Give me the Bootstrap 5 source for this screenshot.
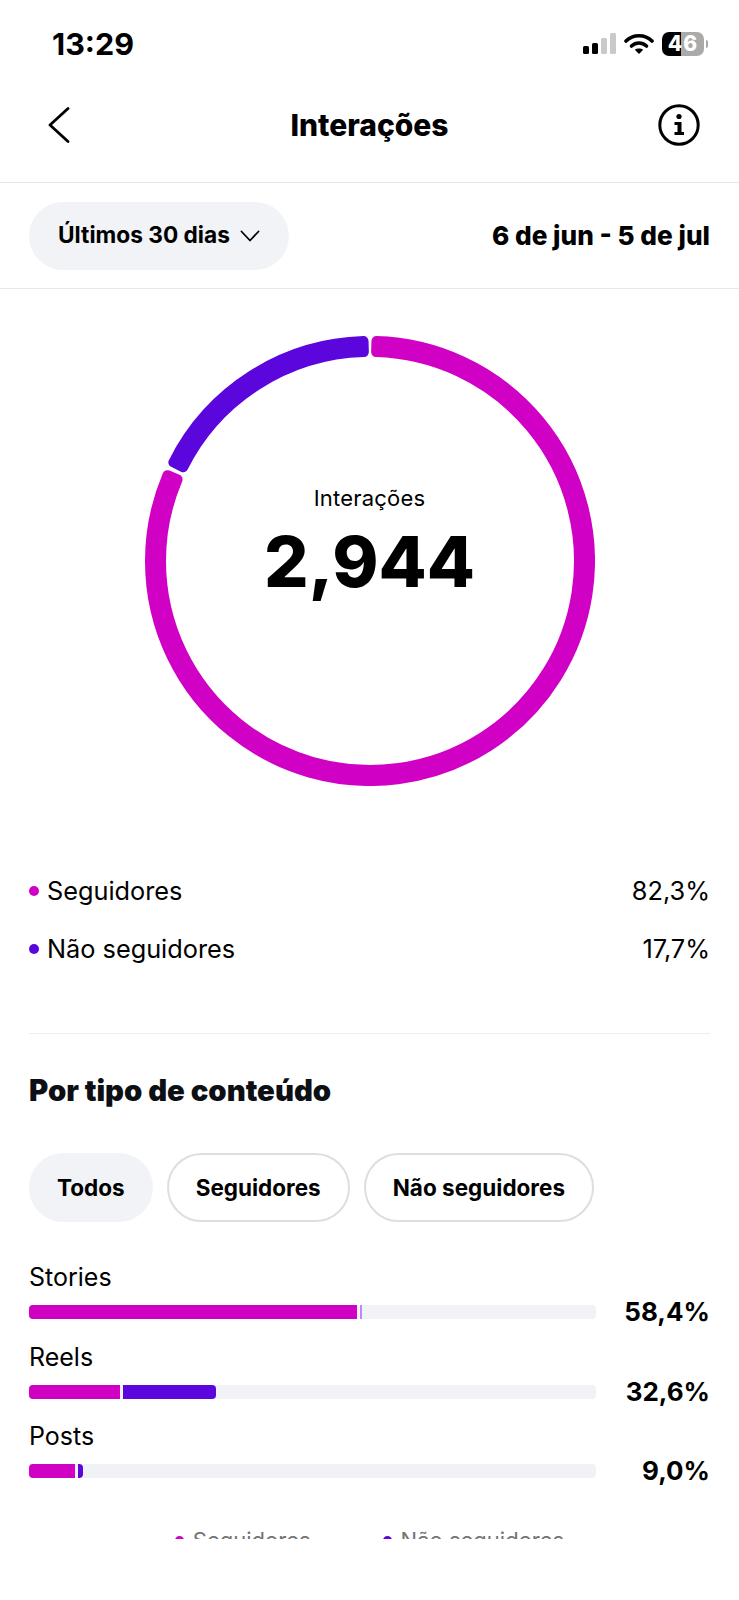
<!DOCTYPE html>
<html lang="pt">
<head>
    <meta charset="UTF-8">
    <meta name="viewport" content="width=device-width, initial-scale=1.0">
    <title>Interações</title>
    <link href="https://cdn.jsdelivr.net/npm/bootstrap@5.3.0/dist/css/bootstrap.min.css" rel="stylesheet">
    <style>
        body { font-family: Inter, "Liberation Sans", sans-serif; color: #000; background: #fff; }
        .statusbar { height: 88px; padding: 0 31px 0 52px; }
        .clock { font-size: 30.5px; font-weight: 700; line-height: 1; }
        .batt { width: 42px; height: 24px; border-radius: 7px; background: linear-gradient(90deg, #000 19px, #aaa 19px); color: #fff; font-size: 21px; font-weight: 800; line-height: 24px; letter-spacing: 1px; }
        .batt-nub { width: 2px; height: 8px; background: #aaa; border-radius: 0 2px 2px 0; margin-left: 2px; }
        .topbar { height: 95px; padding: 0 39px 20px 48px; border-bottom: 1px solid #e6e8eb; }
        .side { width: 60px; }
        .side-end { width: 69px; }
        .page-title { font-size: 30px; font-weight: 800; margin: 0; }
        .filterbar { height: 106px; padding: 0 29px; border-bottom: 1px solid #e6e8eb; }
        .pill-gray { height: 68px; border-radius: 34px; background: #f1f3f6; font-size: 22.7px; font-weight: 700; padding: 0 29px; border: 0; color: #000; gap: 10px; }
        .range { font-size: 26.2px; font-weight: 800; }
        .ring-wrap { width: 450px; height: 450px; margin: 47px auto 76px; }
        .ring-text { inset: 0; }
        .ring-label { font-size: 22px; line-height: 26px; margin-top: -2px; margin-bottom: 11px; letter-spacing: .2px; }
        .ring-num { font-size: 70px; font-weight: 800; line-height: 80px; margin-bottom: 33px; }
        .content { padding: 0 29px; }
        .legend-row { height: 58px; font-size: 25.3px; }
        .dot { width: 10px; height: 10px; border-radius: 50%; margin-right: 8px; flex: none; }
        .c-mag { background: #d000c4; }
        .c-pur { background: #5a06dc; }
        .rule { height: 1px; background: #eceef1; margin: 55px 0 40px; }
        .sect-title { font-size: 29.3px; font-weight: 900; line-height: 34px; color: #0c1014; margin: 0 0 45px; }
        .chip-row { gap: 14px; }
        .chip { height: 69px; border-radius: 35px; border: 2px solid #dcdee1; background: #fff; font-size: 22.5px; font-weight: 700; color: #000; padding: 0 27px; }
        .chip-on { background: #f1f3f6; border-color: #f1f3f6; padding: 0 26px; }
        .rows { margin-top: 40px; }
        .type-label { font-size: 25px; line-height: 30px; margin-bottom: 13px; }
        .type-row { margin-bottom: 22.5px; }
        .bar-line { height: 14px; }
        .track { width: 567px; height: 14px; background: #f0f2f5; border-radius: 4px; overflow: hidden; }
        .seg { height: 100%; }
        .seg-gap { margin-left: 3px; border-radius: 0 4px 4px 0; }
        .pct { font-size: 26px; font-weight: 700; line-height: 30px; }
        .clipped { height: 61px; overflow: hidden; padding-top: 50px; font-size: 22px; line-height: 24px; color: #737373; gap: 72px; }
        .clipped .dot { width: 9px; height: 9px; margin-right: 9px; }
    </style>
</head>
<body>
    <div class="statusbar d-flex align-items-center justify-content-between">
        <div class="clock">13:29</div>
        <div class="d-flex align-items-center">
            <svg width="33" height="22" viewBox="0 0 33 22" class="me-2">
                <rect x="0" y="13" width="6" height="8" rx="1.5" fill="#000"/>
                <rect x="9" y="10" width="6" height="11" rx="1.5" fill="#000"/>
                <rect x="18" y="5" width="6" height="16" rx="1.5" fill="#c9c9c9"/>
                <rect x="27" y="0" width="6" height="21" rx="1.5" fill="#c9c9c9"/>
            </svg>
            <svg width="30" height="22" viewBox="0 0 30 22" class="me-2">
                <path d="M2 8 C9 1 21 1 28 8" fill="none" stroke="#000" stroke-width="3.6" stroke-linecap="round"/>
                <path d="M7.5 13 C12 9 18 9 22.5 13" fill="none" stroke="#000" stroke-width="3.6" stroke-linecap="round"/>
                <path d="M15 21 L10.8 16.8 C13 15 17 15 19.2 16.8 Z" fill="#000"/>
            </svg>
            <div class="batt text-center">46</div>
            <div class="batt-nub"></div>
        </div>
    </div>

    <div class="topbar d-flex align-items-center justify-content-between">
        <div class="side d-flex">
            <svg width="22" height="36" viewBox="0 0 22 36">
                <path d="M20 1.5 L2 18 L20 34.5" fill="none" stroke="#000" stroke-width="2.8" stroke-linecap="round" stroke-linejoin="round"/>
            </svg>
        </div>
        <h1 class="page-title">Interações</h1>
        <div class="side-end d-flex justify-content-end">
            <svg width="42" height="42" viewBox="0 0 42 42">
                <circle cx="21" cy="21" r="19.2" fill="none" stroke="#000" stroke-width="3"/>
                <circle cx="21" cy="12.5" r="2.6" fill="#000"/>
                <path d="M16.5 18 H23.5 V28 H26 V31 H16.5 V28 H19.5 V21 H16.5 Z" fill="#000"/>
            </svg>
        </div>
    </div>

    <div class="filterbar d-flex align-items-center justify-content-between">
        <button class="pill-gray d-flex align-items-center">
            Últimos 30 dias
            <svg width="20" height="12" viewBox="0 0 20 12"><path d="M1.5 1.5 L10 10.5 L18.5 1.5" fill="none" stroke="#000" stroke-width="1.8" stroke-linecap="round" stroke-linejoin="round"/></svg>
        </button>
        <div class="range">6 de jun - 5 de jul</div>
    </div>

    <div class="ring-wrap position-relative">
        <svg width="450" height="450" viewBox="0 0 450 450" class="d-block">
            <path id="arcMag" fill="#d000c4" stroke="#d000c4" stroke-width="10" stroke-linejoin="round"/>
            <path id="arcPur" fill="#5a06dc" stroke="#5a06dc" stroke-width="10" stroke-linejoin="round"/>
        </svg>
        <div class="ring-text position-absolute d-flex flex-column align-items-center justify-content-center">
            <div class="ring-label">Interações</div>
            <div class="ring-num">2,944</div>
        </div>
    </div>

    <div class="content">
        <div class="legend-row d-flex align-items-center justify-content-between">
            <div class="d-flex align-items-center"><span class="dot c-mag"></span>Seguidores</div>
            <div>82,3%</div>
        </div>
        <div class="legend-row d-flex align-items-center justify-content-between">
            <div class="d-flex align-items-center"><span class="dot c-pur"></span>Não seguidores</div>
            <div>17,7%</div>
        </div>

        <div class="rule"></div>

        <h2 class="sect-title">Por tipo de conteúdo</h2>

        <div class="chip-row d-flex">
            <button class="chip chip-on">Todos</button>
            <button class="chip">Seguidores</button>
            <button class="chip">Não seguidores</button>
        </div>

        <div class="rows">
            <div class="type-row">
                <div class="type-label">Stories</div>
                <div class="bar-line d-flex align-items-center justify-content-between">
                    <div class="track d-flex">
                        <div class="seg c-mag" style="width:328px"></div>
                        <div class="seg" style="width:2px;margin-left:3px;background:#b98cf0"></div>
                    </div>
                    <div class="pct">58,4%</div>
                </div>
            </div>
            <div class="type-row">
                <div class="type-label">Reels</div>
                <div class="bar-line d-flex align-items-center justify-content-between">
                    <div class="track d-flex">
                        <div class="seg c-mag" style="width:91px"></div>
                        <div class="seg seg-gap c-pur" style="width:93px"></div>
                    </div>
                    <div class="pct">32,6%</div>
                </div>
            </div>
            <div class="type-row mb-0">
                <div class="type-label">Posts</div>
                <div class="bar-line d-flex align-items-center justify-content-between">
                    <div class="track d-flex">
                        <div class="seg c-mag" style="width:46px"></div>
                        <div class="seg seg-gap c-pur" style="width:5px"></div>
                    </div>
                    <div class="pct">9,0%</div>
                </div>
            </div>
        </div>
    </div>

    <div class="clipped d-flex justify-content-center align-items-start">
        <div class="d-flex align-items-center"><span class="dot c-mag"></span>Seguidores</div>
        <div class="d-flex align-items-center"><span class="dot c-pur"></span>Não seguidores</div>
    </div>

    <script src="https://cdn.jsdelivr.net/npm/bootstrap@5.3.0/dist/js/bootstrap.bundle.min.js"></script>
    <script>
        // ring segments: angles in degrees clockwise from the top, band drawn inset and stroked for the round corners
        function band(a0, a1) {
            let ro = 220, ri = 209, c = 225;
            let pt = (r, a) => {
                let t = a * Math.PI / 180;
                return (c + r * Math.sin(t)).toFixed(2) + " " + (c - r * Math.cos(t)).toFixed(2);
            };
            let large = a1 - a0 > 180 ? 1 : 0;
            return `M${pt(ro, a0)} A${ro} ${ro} 0 ${large} 1 ${pt(ro, a1)} L${pt(ri, a1)} A${ri} ${ri} 0 ${large} 0 ${pt(ri, a0)} Z`;
        }
        document.getElementById("arcMag").setAttribute("d", band(1.68, 292.97));
        document.getElementById("arcPur").setAttribute("d", band(296.63, 358.32));
    </script>
</body>
</html>
